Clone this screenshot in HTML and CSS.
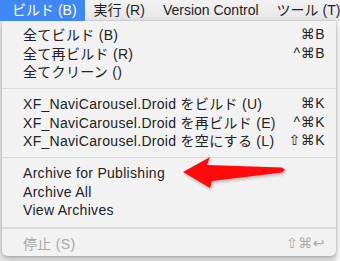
FILE: index.html
```html
<!DOCTYPE html>
<html lang="ja">
<head>
<meta charset="utf-8">
<link rel="stylesheet" href="styles.css">
</head>
<body>
<div class="screen">
  <div class="menubar">
    <div class="mb-item active">ビルド (B)</div>
    <div class="mb-item">実行 (R)</div>
    <div class="mb-item">Version Control</div>
    <div class="mb-item">ツール (T)</div>
  </div>
  <div class="menu">
    <div class="row"><span>全てビルド (B)</span><span class="key">⌘B</span></div>
    <div class="row"><span>全て再ビルド (R)</span><span class="key">^⌘B</span></div>
    <div class="row"><span>全てクリーン ()</span></div>
    <div class="sep s1"></div>
    <div class="row"><span>XF_NaviCarousel.Droid をビルド (U)</span><span class="key">⌘K</span></div>
    <div class="row"><span>XF_NaviCarousel.Droid を再ビルド (E)</span><span class="key">^⌘K</span></div>
    <div class="row"><span>XF_NaviCarousel.Droid を空にする (L)</span><span class="key">⇧⌘K</span></div>
    <div class="sep s2"></div>
    <div class="row"><span>Archive for Publishing</span></div>
    <div class="row"><span>Archive All</span></div>
    <div class="row"><span>View Archives</span></div>
    <div class="sep s3"></div>
    <div class="row disabled"><span>停止 (S)</span><span class="key">⇧⌘↩</span></div>
  </div>
  <svg class="arrow" width="340" height="261" viewBox="0 0 340 261">
    <polygon points="183,172 210,157 207,165 282,167.5 285,170 282,172.5 212,181 210,188" fill="#ff0a0a"/>
  </svg>
</div>
</body>
</html>
```
FILE: styles.css
```css
html, body {
  margin: 0;
  padding: 0;
}
body {
  background: #f7f7f7;
  width: 340px;
  height: 261px;
  overflow: hidden;
  font-family: "Liberation Sans", "Noto Sans CJK JP", sans-serif;
  font-size: 14px;
  color: #222;
}
.screen {
  position: relative;
  width: 340px;
  height: 261px;
  background: linear-gradient(to right, #eeeeee 0, #eeeeee 336px, #fbfbfb 337px);
}
.menubar {
  display: flex;
  height: 21px;
  padding-left: 2px;
  background: linear-gradient(#f2f2f2, #e6e6e6);
  white-space: nowrap;
  overflow: hidden;
}
.mb-item {
  padding: 0 9px;
  line-height: 21px;
  color: #1e1e1e;
  flex-shrink: 0;
}
.mb-item.active {
  background: #3f87f5;
  color: #fff;
  margin-left: -2px;
  padding-left: 12px;
  padding-right: 8px;
}
.menu {
  margin-left: 2px;
  width: 334px;
  height: 235px;
  box-sizing: border-box;
  padding: 4px 0;
  background: #f2f2f2;
  border-radius: 0 0 5px 5px;
  box-shadow: 0 3px 7px rgba(0,0,0,0.28), 0 0 0 0.5px rgba(0,0,0,0.12);
}
.row {
  display: flex;
  justify-content: space-between;
  align-items: center;
  height: 18.5px;
  padding: 0 11px 0 21px;
  letter-spacing: 0.3px;
  white-space: nowrap;
}
.key {
  font-family: "Liberation Sans", "DejaVu Sans", sans-serif;
  letter-spacing: 0.5px;
}
.disabled {
  color: #a9a9a9;
}
.sep {
  height: 13.5px;
  position: relative;
}
.sep::after {
  content: "";
  position: absolute;
  left: 0;
  right: 0;
  top: 7px;
  height: 1.5px;
  background: #dadada;
}
.sep.s2 { height: 14.5px; }
.sep.s3 { height: 14px; }
.sep.s3::after { top: 7.5px; }
.arrow {
  position: absolute;
  left: 0;
  top: 0;
  pointer-events: none;
  filter: drop-shadow(1px 2px 1.5px rgba(0,0,0,0.25));
}
```
